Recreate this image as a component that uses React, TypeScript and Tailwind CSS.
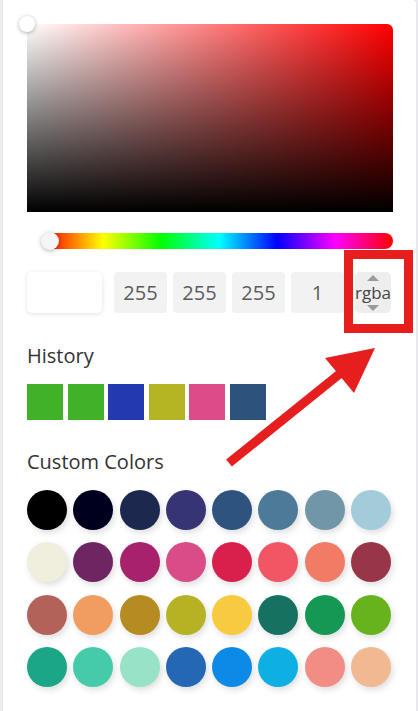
const history = ["#41b227", "#41b227", "#2339b0", "#b5b423", "#db4c88", "#2d527c"];

const customColors = [
  "#000000", "#00001e", "#1c284e", "#373474", "#2e537e", "#4d7a98", "#7196a7", "#a3cbd9",
  "#f0eedc", "#6e2663", "#a7216c", "#da4c87", "#d9204d", "#f15665", "#f17b65", "#993548",
  "#b3625a", "#f19c61", "#b58b22", "#b5b323", "#f7ca40", "#177160", "#149854", "#66b31d",
  "#1ba787", "#46cbaa", "#98e2c8", "#2468b5", "#0d8ae5", "#0eafe3", "#f18d85", "#f0b991",
];

const channels = ["255", "255", "255", "1"];

const App = () => {
  return (
    <div className="relative w-[418px] h-[711px] overflow-hidden bg-[#ececf1] font-['Open_Sans',sans-serif]">
      <div className="ml-[3px] w-[413px] h-[711px] bg-white rounded-tr-[4px] pl-[24px] pt-[24px] shadow-[0_0_2px_rgba(0,0,0,0.08)]">
        {/* saturation / value area */}
        <div className="relative w-[366px] h-[188px] rounded-t-[6px] bg-[linear-gradient(to_top,#000,transparent),linear-gradient(to_right,#fff,#f00)]">
          <div className="absolute -left-[8px] -top-[8px] w-[16px] h-[16px] rounded-full bg-white shadow-[0_1px_4px_rgba(0,0,0,0.3)]" />
        </div>

        {/* hue slider */}
        <div className="relative mt-[21px] ml-[18px] w-[348px] h-[16px] rounded-full bg-[linear-gradient(to_right,#f00,#ff0,#0f0,#0ff,#00f,#f0f,#f00)]">
          <div className="absolute left-[-4px] -top-[1px] w-[18px] h-[18px] rounded-full bg-[#f5f5f5] shadow-[0_1px_4px_rgba(0,0,0,0.3)]" />
        </div>

        {/* inputs */}
        <div className="flex items-center mt-[23px] h-[41px]">
          <div className="w-[75px] h-[41px] rounded-[5px] bg-white shadow-[0_1px_5px_rgba(0,0,0,0.12)]" />
          <div className="flex gap-[6px] ml-[12px]">
            {channels.map((c, i) => (
              <div
                key={i}
                className="w-[53px] h-[41px] rounded-[4px] bg-[#f2f2f2] flex items-center justify-center text-[20px] text-[#5c5c5c]"
              >
                {c}
              </div>
            ))}
          </div>
          <div className="relative ml-[11px] w-[36px] h-[41px] rounded-[5px] bg-[#eeeeee] flex items-center justify-center text-[17px] text-[#444] leading-none">
            <span className="absolute top-[3px] left-1/2 -translate-x-1/2 w-0 h-0 border-x-[6px] border-x-transparent border-b-[6px] border-b-[#9a9a9a]" />
            <span className="-mt-[1px]">rgba</span>
            <span className="absolute bottom-[2px] left-1/2 -translate-x-1/2 w-0 h-0 border-x-[6px] border-x-transparent border-t-[6px] border-t-[#9a9a9a]" />
          </div>
        </div>

        {/* history */}
        <div className="mt-[29px] text-[20px] leading-[27px] text-[#333]">History</div>
        <div className="flex gap-[4.6px] mt-[15px]">
          {history.map((c, i) => (
            <div key={i} className="w-[36px] h-[36px]" style={{ backgroundColor: c }} />
          ))}
        </div>

        {/* custom colors */}
        <div className="mt-[28px] text-[20px] leading-[27px] text-[#333]">Custom Colors</div>
        <div className="grid grid-cols-[repeat(8,40px)] gap-x-[6.3px] gap-y-[12.4px] mt-[15px]">
          {customColors.map((c, i) => (
            <div
              key={i}
              className="w-[40px] h-[40px] rounded-full shadow-[2px_3px_6px_rgba(0,0,0,0.13)]"
              style={{ backgroundColor: c }}
            />
          ))}
        </div>
      </div>

      {/* annotation overlay */}
      <div className="absolute left-[344px] top-[250px] w-[69px] h-[83px] border-[9px] border-[#e61e1e] pointer-events-none" />
      <svg className="absolute left-0 top-0 pointer-events-none" width="418" height="711" viewBox="0 0 418 711">
        <line x1="229" y1="463" x2="342" y2="372" stroke="#e61e1e" strokeWidth="9" />
        <polygon points="375,348 325,358 354,393" fill="#e61e1e" />
      </svg>
    </div>
  );
};

export default App;
